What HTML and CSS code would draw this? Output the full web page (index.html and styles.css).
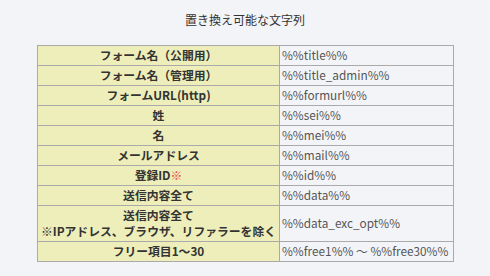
FILE: index.html
```html
<!DOCTYPE html>
<html lang="ja">
<head>
<meta charset="utf-8">
<link rel="stylesheet" href="styles.css">
</head>
<body>
<div class="page">
  <h2 class="title">置き換え可能な文字列</h2>
  <table class="vars">
    <colgroup><col class="c-key"><col class="c-val"></colgroup>
    <tr><th>フォーム名（公開用）</th><td>%%title%%</td></tr>
    <tr><th>フォーム名（管理用）</th><td>%%title_admin%%</td></tr>
    <tr><th>フォームURL(http)</th><td>%%formurl%%</td></tr>
    <tr><th>姓</th><td>%%sei%%</td></tr>
    <tr><th>名</th><td>%%mei%%</td></tr>
    <tr><th>メールアドレス</th><td>%%mail%%</td></tr>
    <tr><th>登録ID<span class="req">※</span></th><td>%%id%%</td></tr>
    <tr><th>送信内容全て</th><td>%%data%%</td></tr>
    <tr><th>送信内容全て<br>※IPアドレス、ブラウザ、リファラーを除く</th><td>%%data_exc_opt%%</td></tr>
    <tr><th>フリー項目1〜30</th><td>%%free1%% 〜 %%free30%%</td></tr>
  </table>
</div>
</body>
</html>
```

FILE: styles.css
```css
html, body {
  margin: 0;
  padding: 0;
  background: #f3f4f8;
}
.page {
  font-family: "Noto Sans CJK JP", "Noto Sans", sans-serif;
  color: #333;
  display: flex;
  flex-direction: column;
  align-items: center;
  padding-top: 11px;
}
.title {
  margin: 0 0 16px 0;
  font-size: 12px;
  font-weight: normal;
  line-height: 18px;
  color: #333;
}
.vars {
  border-collapse: collapse;
  table-layout: fixed;
  width: 416px;
  margin-left: 1px;
  font-size: 11.8px;
}
.c-key { width: 242px; }
.c-val { width: 174px; }
.vars th, .vars td {
  border: 1px solid #aaa;
  line-height: 16px;
  padding: 1px 2px 2px;
  white-space: nowrap;
  overflow: hidden;
}
.vars th {
  background: #eeeeba;
  font-weight: bold;
  text-align: center;
  color: #333;
}
.vars td {
  text-align: left;
  color: #555;
}
.req {
  color: #ee4444;
}
```
